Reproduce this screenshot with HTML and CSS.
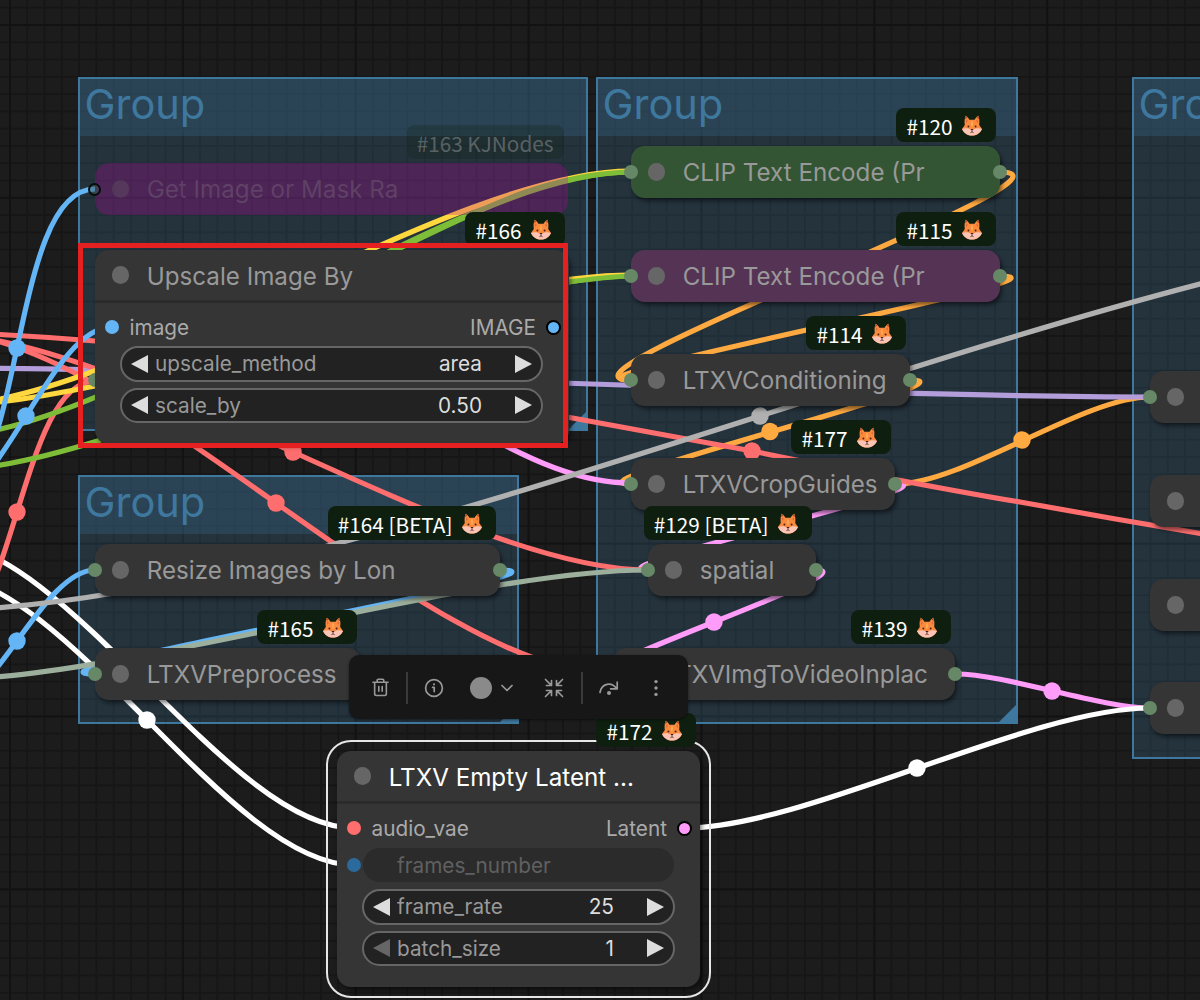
FILE: index.html
```html
<!DOCTYPE html>
<html lang="en">
<head>
    <meta charset="UTF-8">
    <meta name="viewport" content="width=device-width, initial-scale=1.0">
    <title>Workflow Editor</title>
    <link rel="stylesheet" href="styles.css">
</head>
<body>
    <svg class="defs" width="0" height="0">
        <symbol id="fox" viewBox="0 0 20 20">
            <path d="M3.6 0.3 C4.9 0.8 6.6 2.8 7.4 4.2 H12.6 C13.4 2.8 15.1 0.8 16.4 0.3 C17.6 3.4 17.6 7 17.2 9.4 L20 13.4 C18 17.8 14 20 10 20 C6 20 2 17.8 0 13.4 L2.8 9.4 C2.4 7 2.4 3.4 3.6 0.3 Z" fill="#f98a3e"/>
            <path d="M3.6 0.3 C4.3 0.6 5 1.2 5.6 1.9 L3 3.4 C3.1 2.2 3.3 1.2 3.6 0.3 Z M16.4 0.3 C15.7 0.6 15 1.2 14.4 1.9 L17 3.4 C16.9 2.2 16.7 1.2 16.4 0.3 Z" fill="#a8502e"/>
            <path d="M4 3.6 L6 5.6 L4 7.6 Z M16 3.6 L14 5.6 L16 7.6 Z" fill="#e06c3c"/>
            <path d="M10 5 C11.8 6.8 11.6 9.6 10 12 C8.4 9.6 8.2 6.8 10 5 Z" fill="#ffa64f"/>
            <path d="M0 13.4 C3.4 12.2 6.6 12.6 8.4 14 H11.6 C13.4 12.6 16.6 12.2 20 13.4 C18 17.8 14 20 10 20 C6 20 2 17.8 0 13.4 Z" fill="#fbc4b4"/>
            <circle cx="6.4" cy="11" r="0.95" fill="#4a2018"/>
            <circle cx="13.6" cy="11" r="0.95" fill="#4a2018"/>
            <path d="M8.5 13.4 H11.5 L10 15.2 Z" fill="#2c1a1e"/>
            <path d="M10 15 V16.4 M8.4 17.2 L10 16.4 L11.6 17.2" stroke="#4a2a2c" stroke-width="0.8" fill="none"/>
        </symbol>
    </svg>

    <main class="canvas">
        <section class="group group-a"><h2>Group</h2></section>
        <section class="group group-b"><h2>Group</h2></section>
        <section class="group group-c"><h2>Group</h2></section>
        <section class="group group-d"><h2>Group</h2></section>

        <svg class="links" viewBox="0 0 1200 1000">
            <!-- conditioning -->
            <g class="link conditioning">
                <path d="M1000 172 C1106 172 525 380 631 380"/>
                <path d="M1000 276 C1096 276 535 380 631 380"/>
                <path d="M911 380 C986 380 556 484 631 484"/>
                <path d="M896 484 C963 484 1083 397 1150 397"/>
                <circle cx="770" cy="431.5" r="8.7"/>
                <circle cx="1022" cy="440" r="8.7"/>
            </g>
            <!-- model -->
            <g class="link model">
                <path d="M-60 368 C243 368 847 397 1150 397"/>
            </g>
            <!-- latent -->
            <g class="link latent">
                <path d="M480 432 C530 460 580 483 631 483"/>
                <path d="M896 484 C961 484 583 570 648 570"/>
                <path d="M816 570 C873 570 555 674 612 674"/>
                <path d="M956 674 C1005 674 1101 708 1150 708"/>
                <circle cx="714" cy="622" r="8.7"/>
                <circle cx="1052" cy="691" r="8.7"/>
            </g>
            <!-- white reroutes -->
            <g class="link active">
                <path d="M-60 542 C66 542 228 828 354 828"/>
                <path d="M-60 575 C66 575 228 865 354 865"/>
                <path d="M685 828 C805 828 1030 708 1150 708"/>
                <circle cx="147" cy="720" r="8.7"/>
                <circle cx="917" cy="768" r="8.7"/>
            </g>
            <!-- vae -->
            <g class="link vae">
                <path d="M-10 334 C30 336 60 338 95 341 C250 353 450 394 567 417 L752 451 C850 471 960 492 1020 502 C1080 513 1150 525 1210 535"/>
                <path d="M-62 334 C125 334 461 570 648 570"/>
                <path d="M-60 332 C128 332 424 674 612 674"/>
                <path d="M-61 643 C14 643 20 381 95 381"/>
                <circle cx="752" cy="451" r="8.7"/>
                <circle cx="293" cy="452" r="8.7"/>
                <circle cx="276" cy="503" r="8.7"/>
                <circle cx="17" cy="512" r="8.7"/>
            </g>
            <!-- clip -->
            <g class="link text">
                <path d="M-60 437 C122 437 449 172 631 172"/>
                <path d="M-60 471 C122 471 449 276 631 276"/>
            </g>
            <g class="link clip">
                <path d="M-60 406 C122 406 449 171 631 171"/>
                <path d="M-60 406 C115 406 456 275 631 275"/>
            </g>
            <g class="link text">
                <path d="M396 250 C474 213 545 173.5 631 172"/>
                <path d="M540 286 C570 281.5 600 277 631 276"/>
            </g>
            <!-- image -->
            <g class="link image">
                <path d="M-61 507 C27 507 7 189 95 189"/>
                <path d="M-60 505 C2 505 50 327 112 327"/>
                <path d="M-61 712 C-8 712 42 570 95 570"/>
                <path d="M500 570 C604 570 -9 674 95 674"/>
                <circle cx="17" cy="348" r="8.7"/>
                <circle cx="26" cy="416" r="8.7"/>
                <circle cx="17" cy="641" r="8.7"/>
            </g>
            <g class="link any">
                <path d="M-60 610 C361 610 1159 222 1580 222"/>
                <circle cx="760" cy="416" r="8.7"/>
            </g>
            <g class="link value">
                <path d="M-60 680 C119 680 469 570 648 570"/>
            </g>
            <circle class="hidden-slot" cx="95" cy="380" r="6.9"/>
        </svg>

        <article class="node collapsed bypassed" id="n163">
            <span class="badge">#163 KJNodes</span>
            <header><i class="dot"></i><h3>Get Image or Mask Ra</h3></header>
            <i class="port in ring"></i>
        </article>

        <article class="node collapsed green" id="n120">
            <span class="badge">#120 <svg class="fox"><use href="#fox"/></svg></span>
            <header><i class="dot"></i><h3>CLIP Text Encode (Pr</h3></header>
            <i class="port in"></i><i class="port out"></i>
        </article>

        <article class="node collapsed plum" id="n115">
            <span class="badge">#115 <svg class="fox"><use href="#fox"/></svg></span>
            <header><i class="dot"></i><h3>CLIP Text Encode (Pr</h3></header>
            <i class="port in"></i><i class="port out"></i>
        </article>

        <article class="node collapsed" id="n114">
            <span class="badge">#114 <svg class="fox"><use href="#fox"/></svg></span>
            <header><i class="dot"></i><h3>LTXVConditioning</h3></header>
            <i class="port in"></i><i class="port out"></i>
        </article>

        <article class="node collapsed" id="n177">
            <span class="badge">#177 <svg class="fox"><use href="#fox"/></svg></span>
            <header><i class="dot"></i><h3>LTXVCropGuides</h3></header>
            <i class="port in"></i><i class="port out"></i>
        </article>

        <article class="node collapsed" id="n129">
            <span class="badge">#129 [BETA] <svg class="fox"><use href="#fox"/></svg></span>
            <header><i class="dot"></i><h3>spatial</h3></header>
            <i class="port in"></i><i class="port out"></i>
        </article>

        <article class="node collapsed" id="n139">
            <span class="badge">#139 <svg class="fox"><use href="#fox"/></svg></span>
            <header><i class="dot"></i><h3>LTXVImgToVideoInplac</h3></header>
            <i class="port in"></i><i class="port out"></i>
        </article>

        <article class="node collapsed" id="n164">
            <span class="badge">#164 [BETA] <svg class="fox"><use href="#fox"/></svg></span>
            <header><i class="dot"></i><h3>Resize Images by Lon</h3></header>
            <i class="port in"></i><i class="port out"></i>
        </article>

        <article class="node collapsed" id="n165">
            <span class="badge">#165 <svg class="fox"><use href="#fox"/></svg></span>
            <header><i class="dot"></i><h3>LTXVPreprocess</h3></header>
            <i class="port in"></i>
        </article>

        <article class="node collapsed edge" id="e1"><header><i class="dot"></i></header><i class="port in"></i></article>
        <article class="node collapsed edge" id="e2"><header><i class="dot"></i></header></article>
        <article class="node collapsed edge" id="e3"><header><i class="dot"></i></header></article>
        <article class="node collapsed edge" id="e4"><header><i class="dot"></i></header><i class="port in"></i></article>

        <article class="node" id="n166">
            <span class="badge">#166 <svg class="fox"><use href="#fox"/></svg></span>
            <header><i class="dot"></i><h3>Upscale Image By</h3></header>
            <div class="slots">
                <i class="slot blue"></i><span>image</span>
                <span class="output">IMAGE</span><i class="slot blue connected"></i>
            </div>
            <div class="widgets">
                <div class="widget"><i class="prev"></i><label>upscale_method</label><output>area</output><i class="next"></i></div>
                <div class="widget"><i class="prev"></i><label>scale_by</label><output>0.50</output><i class="next"></i></div>
            </div>
        </article>

        <article class="node selected" id="n172">
            <span class="badge">#172 <svg class="fox"><use href="#fox"/></svg></span>
            <header><i class="dot"></i><h3>LTXV Empty Latent ...</h3></header>
            <div class="slots">
                <i class="slot red"></i><span>audio_vae</span>
                <span class="output">Latent</span><i class="slot pink connected"></i>
            </div>
            <div class="linked"><i class="slot navy"></i><div class="pill">frames_number</div></div>
            <div class="widgets">
                <div class="widget"><i class="prev"></i><label>frame_rate</label><output>25</output><i class="next"></i></div>
                <div class="widget"><i class="prev off"></i><label>batch_size</label><output>1</output><i class="next"></i></div>
            </div>
        </article>

        <div class="highlight"></div>

        <nav class="toolbox">
            <svg class="icon trash" viewBox="0 0 18 20"><path d="M1 4.5 H17 M5.5 4.5 V2.5 Q5.5 1.3 6.7 1.3 H11.3 Q12.5 1.3 12.5 2.5 V4.5 M2.8 4.5 V16.7 Q2.8 18.5 4.6 18.5 H13.4 Q15.2 18.5 15.2 16.7 V4.5 M7.2 9 V14 M10.8 9 V14"/></svg>
            <span class="divider"></span>
            <svg class="icon info" viewBox="0 0 20 20"><circle cx="10" cy="10" r="8.4"/><path d="M8.6 9.3 H10.2 V13.6"/><circle class="fill" cx="10" cy="6.3" r="1.1"/></svg>
            <span class="color"></span>
            <svg class="icon chevron" viewBox="0 0 12 8"><path d="M1 1.5 L6 6.5 L11 1.5"/></svg>
            <svg class="icon shrink" viewBox="0 0 20 20"><path d="M1.5 1.5 L7.3 7.3 M7.5 2.5 V7.5 H2.5 M18.5 1.5 L12.7 7.3 M12.5 2.5 V7.5 H17.5 M1.5 18.5 L7.3 12.7 M7.5 17.5 V12.5 H2.5 M18.5 18.5 L12.7 12.7 M12.5 17.5 V12.5 H17.5"/></svg>
            <span class="divider"></span>
            <svg class="icon bypass" viewBox="0 0 20 16"><path d="M1 12.5 C2.5 3 12.5 1.5 17.6 8.5 M18.2 2.2 V8.8 H11.6"/><circle class="fill" cx="10" cy="13" r="2"/></svg>
            <svg class="icon more" viewBox="0 0 6 18"><circle class="fill" cx="3" cy="2.6" r="1.7"/><circle class="fill" cx="3" cy="9" r="1.7"/><circle class="fill" cx="3" cy="15.4" r="1.7"/></svg>
        </nav>
    </main>
</body>
</html>
```
FILE: styles.css
```css
* {
    box-sizing: border-box;
}
body {
    margin: 0;
    font-family: Inter, "Liberation Sans", sans-serif;
    background-color: #1b1b1b;
}
.defs {
    display: block;
}
.canvas {
    position: relative;
    width: 1200px;
    height: 1000px;
    overflow: hidden;
    background-color: #1c1c1c;
    background-image:
        linear-gradient(to right, #121212 2px, transparent 2px),
        linear-gradient(to bottom, #121212 2px, transparent 2px),
        linear-gradient(to right, #161616 1.7px, transparent 1.7px),
        linear-gradient(to bottom, #161616 1.7px, transparent 1.7px);
    background-size: 172.9px 172.9px, 172.9px 172.9px, 17.29px 17.29px, 17.29px 17.29px;
    background-position: 9px 24px;
}

/* groups */
.group {
    position: absolute;
    background-color: rgba(63, 120, 158, 0.25);
    border: 2px solid #3f789e;
}
.group::after {
    content: "";
    position: absolute;
    right: 0;
    bottom: 0;
    border-style: solid;
    border-width: 0 0 17px 17px;
    border-color: transparent transparent #3f789e transparent;
}
.group h2 {
    margin: 0;
    height: 57px;
    padding-left: 4.5px;
    background-color: rgba(63, 120, 158, 0.25);
    color: #3f789e;
    font-size: 41.5px;
    font-weight: 400;
    line-height: 50px;
}
.group-a { left: 78px; top: 77px; width: 510px; height: 354px; }
.group-b { left: 596px; top: 77px; width: 422px; height: 647px; }
.group-c { left: 1132px; top: 77px; width: 400px; height: 682px; }
.group-d { left: 78px; top: 475px; width: 441px; height: 249px; }

/* links */
.links {
    position: absolute;
    left: 0;
    top: 0;
    width: 1200px;
    height: 1000px;
}
.link path {
    fill: none;
    stroke: currentColor;
    stroke-width: 5.2;
}
.link circle {
    fill: currentColor;
}
.conditioning { color: #ffa941; }
.model { color: #b39ddb; }
.latent { color: #ff9cf9; }
.active { color: #ffffff; }
.vae { color: #ff6e6e; }
.text { color: #7ebd37; }
.clip { color: #ffd73e; }
.image { color: #64b5f6; }
.any { color: #b0b0b0; }
.value { color: #9cae9c; }
.hidden-slot { fill: #668866; }

/* nodes */
.node {
    position: absolute;
    background-color: #353535;
    border-radius: 14px;
    box-shadow: 2px 3px 4px rgba(0, 0, 0, 0.5);
}
.node header {
    display: flex;
    align-items: center;
    gap: 17.3px;
    height: 52px;
    padding-left: 17px;
}
.node:not(.collapsed) header {
    height: 53px;
    border-bottom: 3px solid #2b2b2b;
}
.node:not(.collapsed) h3 {
    padding-top: 2px;
}
.node h3 {
    margin: 0;
    color: #999;
    font-size: 24.2px;
    font-weight: 400;
    white-space: nowrap;
}
.dot {
    flex: none;
    width: 17.4px;
    height: 17.4px;
    border-radius: 50%;
    background-color: #666;
}
.collapsed {
    height: 52px;
}
.green { background-color: #335533; }
.plum { background-color: #553355; }
.bypassed {
    background-color: rgba(190, 0, 160, 0.27);
    box-shadow: none;
}
.bypassed h3 { color: rgba(153, 153, 153, 0.25); }
.bypassed .dot { background-color: rgba(102, 102, 102, 0.3); }
.bypassed .badge {
    background-color: rgba(15, 31, 15, 0.25);
    color: rgba(255, 255, 255, 0.27);
    padding: 2px 10px 0;
}
#n163 { left: 95px; top: 163px; width: 473px; }
#n120 { left: 631px; top: 146px; width: 369px; }
#n115 { left: 631px; top: 250px; width: 369px; }
#n114 { left: 631px; top: 354px; width: 279px; }
#n177 { left: 631px; top: 458px; width: 264px; }
#n129 { left: 648px; top: 544px; width: 168px; }
#n139 { left: 613px; top: 648px; width: 342px; }
#n164 { left: 95px; top: 544px; width: 405px; }
#n165 { left: 95px; top: 648px; width: 266px; }
#n166 { left: 95px; top: 250px; width: 474px; height: 194px; }
#n172 { left: 337px; top: 751px; width: 363px; height: 236px; }
.edge { left: 1149.5px; width: 200px; }
#e1 { top: 371px; }
#e2 { top: 475px; }
#e3 { top: 579px; }
#e4 { top: 682px; }

.selected::before {
    content: "";
    position: absolute;
    inset: -11px;
    border: 2px solid #e6e6e6;
    border-radius: 25px;
}
.selected h3 { color: #fff; }

.port {
    position: absolute;
    top: 19px;
    width: 14px;
    height: 14px;
    border-radius: 50%;
    background-color: #668866;
}
.in { left: -7px; }
.out { right: -6.5px; }
.ring {
    left: -7px;
    top: 19.5px;
    width: 13px;
    height: 13px;
    background-color: rgba(60, 90, 90, 0.5);
    border: 2.5px solid #050d0a;
}

.badge {
    position: absolute;
    right: 4.5px;
    top: -38px;
    display: flex;
    align-items: center;
    gap: 9px;
    height: 34px;
    padding: 1px 14px 0 10px;
    border-radius: 8px;
    background-color: #0f1f0f;
    color: #fff;
    font-family: "Noto Sans CJK SC", "Noto Sans", sans-serif;
    font-size: 20.75px;
    white-space: nowrap;
}
.fox {
    width: 20px;
    height: 21px;
}

/* slots and widgets */
.slots, .linked {
    display: flex;
    align-items: center;
    height: 35px;
    margin-top: 6.5px;
    padding: 0 8.5px 0 10px;
    color: #aaa;
    font-size: 20.75px;
}
.slots span {
    margin-left: 10.5px;
}
.slots .output {
    margin: 0 9.5px 0 auto;
}
.slot {
    flex: none;
    width: 14px;
    height: 14px;
    border-radius: 50%;
}
.blue { background-color: #64b5f6; }
.red { background-color: #ff6e6e; }
.pink { background-color: #ff9cf9; }
.navy { background-color: #2c6a9c; }
.connected {
    width: 15px;
    height: 15px;
    border: 2px solid #000;
}
.linked {
    height: 34px;
    margin: 2.5px 0 7px;
    padding-right: 26px;
}
.pill {
    flex: 1;
    height: 34px;
    margin-left: 2px;
    padding-left: 34px;
    border-radius: 17px;
    background-color: #2b2b2b;
    color: #606060;
    line-height: 35px;
}
.widgets {
    display: flex;
    flex-direction: column;
    gap: 6px;
    padding: 0 25px;
}
#n166 .widgets {
    padding: 1.5px 26px 0 25px;
}
.widget {
    display: flex;
    align-items: center;
    height: 35.5px;
    padding: 0 9px;
    border: 2px solid #666;
    border-radius: 18px;
    background-color: #222;
    font-size: 20.75px;
}
.widget label {
    margin-left: 7px;
    color: #999;
}
.widget output {
    margin: 0 33px 0 auto;
    color: #ddd;
}
.prev, .next {
    border-style: solid;
    border-color: transparent #ddd;
}
.prev { border-width: 9px 17px 9px 0; }
.next { border-width: 9px 0 9px 17px; }
.off { border-color: transparent #666; }

.highlight {
    position: absolute;
    left: 78px;
    top: 243px;
    width: 490px;
    height: 205px;
    border: 5px solid #e42020;
}

/* floating toolbox */
.toolbox {
    position: absolute;
    left: 349px;
    top: 655px;
    width: 339px;
    height: 64px;
    display: flex;
    align-items: center;
    padding: 1px 0 0 23px;
    border-radius: 10px;
    background-color: #171717;
    box-shadow: 0 1px 3px rgba(0, 0, 0, 0.5);
}
.icon {
    flex: none;
    fill: none;
    stroke: #999;
    stroke-width: 1.7;
    stroke-linecap: round;
    stroke-linejoin: round;
}
.icon .fill {
    fill: #999;
    stroke: none;
}
.divider {
    width: 2px;
    height: 32px;
    background-color: #3a3a3a;
}
.trash { width: 17px; height: 19px; margin-right: 16.5px; }
.info { width: 20px; height: 20px; margin: 0 26px 0 16px; }
.color {
    width: 22px;
    height: 22px;
    margin-right: 9px;
    border-radius: 50%;
    background-color: #8a8a8a;
}
.chevron { width: 12px; height: 8px; margin-right: 31px; }
.shrink { width: 20px; height: 20px; margin-right: 17px; }
.bypass { width: 20px; height: 16px; margin: 0 34px 0 16.5px; }
.more { width: 6px; height: 18px; }
```
